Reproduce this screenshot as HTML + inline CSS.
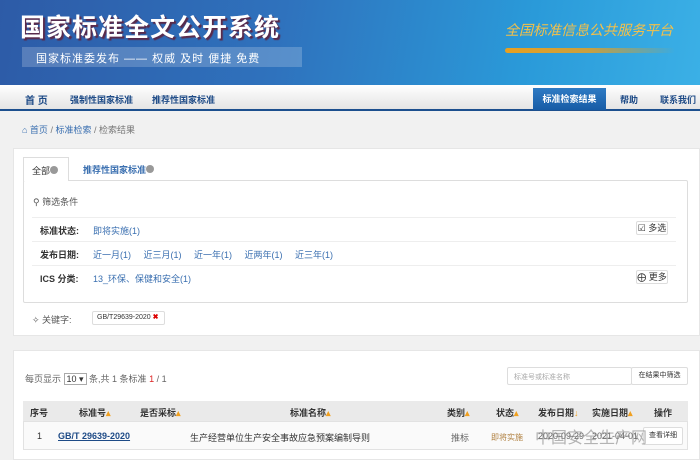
<!DOCTYPE html>
<html><head><meta charset="utf-8"><style>
*{margin:0;padding:0;box-sizing:border-box}
body{width:700px;height:459px;overflow:hidden;background:#f1f1f1;font-family:"Liberation Sans","Noto Sans CJK SC",sans-serif;font-size:9px;color:#333;position:relative}
.a{position:absolute}
.hdr{left:0;top:0;width:700px;height:85px;background:linear-gradient(100deg,#2d5ba7 0%,#2f72bd 40%,#2a9ad9 75%,#3bb0e6 100%)}
.nav{left:0;top:85px;width:700px;height:26px;background:linear-gradient(#fff,#e4e4e4);border-bottom:2px solid #1c4f8e}
.lk{color:#3a6fb0}
.bd{border:1px solid #ddd;border-radius:2px;background:#fff}
</style></head><body>
<div class="a hdr">
 <div class="a" style="left:20px;top:8px;font-size:25px;font-weight:bold;color:#fff;letter-spacing:1px;text-shadow:2px 2px 1px #5a2a4a">国家标准全文公开系统</div>
 <div class="a" style="left:22px;top:47px;width:280px;height:20px;background:rgba(255,255,255,.2)"></div>
 <div class="a" style="left:36px;top:50px;font-size:11px;color:#fff;letter-spacing:1px">国家标准委发布 —— 权威 及时 便捷 免费</div>
 <div class="a" style="left:505px;top:20px;font-size:14px;color:#f3c04a;font-style:italic">全国标准信息公共服务平台</div>
 <div class="a" style="left:505px;top:48px;width:170px;height:5px;background:linear-gradient(90deg,#e8a020,#c8a040,transparent);border-radius:3px"></div>
</div>
<div class="a nav">
 <span class="a" style="left:25px;top:7px;font-size:10px;font-weight:bold;color:#1d4a86">首 页</span>
 <span class="a" style="left:70px;top:8px;font-size:9px;font-weight:bold;color:#1d4a86">强制性国家标准</span>
 <span class="a" style="left:152px;top:8px;font-size:9px;font-weight:bold;color:#1d4a86">推荐性国家标准</span>
 <div class="a" style="left:533px;top:3px;width:73px;height:22px;background:linear-gradient(#2f7bc4,#175ca6);color:#fff;font-weight:bold;text-align:center;line-height:22px">标准检索结果</div>
 <span class="a" style="left:620px;top:8px;font-weight:bold;color:#1d4a86">帮助</span>
 <span class="a" style="left:660px;top:8px;font-weight:bold;color:#1d4a86">联系我们</span>
</div>
<div class="a" style="left:22px;top:123px;color:#777"><span class="lk">&#8962; 首页</span> / <span class="lk">标准检索</span> / 检索结果</div>
<div class="a" style="left:13px;top:148px;width:687px;height:188px;background:#fff;border:1px solid #e6e6e6"></div>
<div class="a" style="left:23px;top:157px;width:46px;height:24px;background:#fff;border:1px solid #ddd;border-bottom:none;padding:6px 8px;z-index:2">全部<span style="display:inline-block;width:8px;height:8px;border-radius:50%;background:#999"></span></div>
<div class="a" style="left:83px;top:163px;color:#3a6fb0;font-weight:bold">推荐性国家标准<span style="display:inline-block;width:8px;height:8px;border-radius:50%;background:#999"></span></div>
<div class="a" style="left:23px;top:180px;width:665px;height:123px;border:1px solid #ddd;border-radius:2px;background:#fff"></div>
<div class="a" style="left:33px;top:195px;color:#555">&#9906; 筛选条件</div>
<div class="a" style="left:32px;top:217px;width:644px;border-top:1px solid #eee"></div>
<div class="a" style="left:32px;top:241px;width:644px;border-top:1px solid #eee"></div>
<div class="a" style="left:32px;top:265px;width:644px;border-top:1px solid #eee"></div>
<div class="a" style="left:40px;top:224px;font-weight:bold">标准状态:</div>
<div class="a lk" style="left:93px;top:224px">即将实施(1)</div>
<div class="a bd" style="left:636px;top:221px;width:32px;height:14px;text-align:center;line-height:12px">&#9745; 多选</div>
<div class="a" style="left:40px;top:248px;font-weight:bold">发布日期:</div>
<div class="a lk" style="left:93px;top:248px;word-spacing:10px">近一月(1) 近三月(1) 近一年(1) 近两年(1) 近三年(1)</div>
<div class="a" style="left:40px;top:272px;font-weight:bold">ICS 分类:</div>
<div class="a lk" style="left:93px;top:272px">13_环保、保健和安全(1)</div>
<div class="a bd" style="left:636px;top:270px;width:32px;height:14px;text-align:center;line-height:12px">&#10753; 更多</div>
<div class="a" style="left:32px;top:313px;color:#555">&#10023; 关键字:</div>
<div class="a bd" style="left:92px;top:311px;width:73px;height:14px;font-size:7px;line-height:12px;padding-left:4px">GB/T29639-2020 <b style="color:#d00">✖</b></div>
<div class="a" style="left:13px;top:350px;width:687px;height:110px;background:#fff;border:1px solid #e6e6e6"></div>
<div class="a" style="left:25px;top:372px;color:#666">每页显示 <span style="border:1px solid #aaa;padding:0 2px;color:#333">10 ▾</span> 条,共 1 条标准 <span style="color:#d22">1</span> / 1</div>
<div class="a bd" style="left:507px;top:367px;width:125px;height:18px;color:#aaa;font-size:7px;padding:4px 6px">标准号或标准名称</div>
<div class="a bd" style="left:631px;top:367px;width:57px;height:18px;font-size:7px;text-align:center;line-height:16px">在结果中筛选</div>
<div class="a" style="left:23px;top:401px;width:665px;height:20px;background:#eaeaea;font-weight:bold"></div>
<div class="a" style="left:23px;top:421px;width:665px;height:29px;background:#fafafa;border:1px solid #e2e2e2"></div>
<div class="a" style="left:30px;top:406px;font-weight:bold">序号</div>
<div class="a" style="left:79px;top:406px;font-weight:bold">标准号<span style="color:#f0a020">▴</span></div>
<div class="a" style="left:140px;top:406px;font-weight:bold">是否采标<span style="color:#f0a020">▴</span></div>
<div class="a" style="left:290px;top:406px;font-weight:bold">标准名称<span style="color:#f0a020">▴</span></div>
<div class="a" style="left:447px;top:406px;font-weight:bold">类别<span style="color:#f0a020">▴</span></div>
<div class="a" style="left:496px;top:406px;font-weight:bold">状态<span style="color:#f0a020">▴</span></div>
<div class="a" style="left:538px;top:406px;font-weight:bold">发布日期<span style="color:#f0a020">↓</span></div>
<div class="a" style="left:592px;top:406px;font-weight:bold">实施日期<span style="color:#f0a020">▴</span></div>
<div class="a" style="left:654px;top:406px;font-weight:bold">操作</div>
<div class="a" style="left:37px;top:431px">1</div>
<div class="a" style="left:58px;top:431px;font-weight:bold;color:#1d4a86;text-decoration:underline">GB/T 29639-2020</div>
<div class="a" style="left:190px;top:431px">生产经营单位生产安全事故应急预案编制导则</div>
<div class="a" style="left:451px;top:431px;color:#666">推标</div>
<div class="a" style="left:491px;top:432px;color:#b08040;font-size:8px">即将实施</div>
<div class="a" style="left:538px;top:431px;color:#666">2020-09-29</div>
<div class="a" style="left:592px;top:431px;color:#666">2021-04-01</div>
<div class="a bd" style="left:643px;top:427px;width:40px;height:18px;font-size:7px;text-align:center;line-height:16px">查看详细</div>
<div class="a" style="left:535px;top:424px;font-size:16px;color:rgba(120,120,120,.55)">中国安全生产网</div>
</body></html>
